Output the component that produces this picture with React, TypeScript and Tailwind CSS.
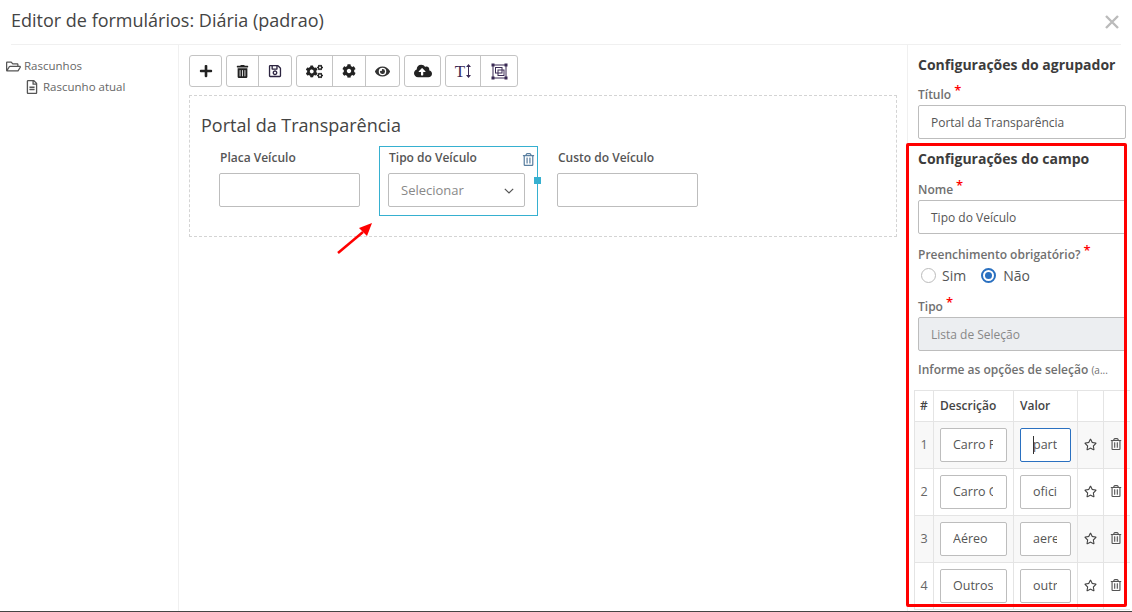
import React from 'react';
import {
  FaPlus, FaTrashAlt, FaRegSave, FaCogs, FaCog, FaEye, FaCloudUploadAlt,
  FaRegStar, FaRegTrashAlt, FaRegFolderOpen, FaRegFileAlt,
} from 'react-icons/fa';

const btn = 'flex h-[30px] items-center justify-center text-[#222]';

const Req = () => <span className="relative top-[-4px] ml-[3px] text-[13px] leading-none text-[#f00]">*</span>;

const Label = ({ children, className = '' }: { children: React.ReactNode; className?: string }) => (
  <div className={`text-[12px] leading-[16px] font-semibold text-[#707070] ${className}`}>{children}</div>
);

const TextBox = ({ value, className = '' }: { value: string; className?: string }) => (
  <div className={`flex h-[34px] w-[208px] shrink-0 items-center rounded-[2px] border border-[#bdbdbd] pt-px pl-3 text-[12px] text-[#555] ${className}`}>
    {value}
  </div>
);

const rows = [
  { n: 1, d: 'Carro Particular', v: 'particular', focus: true },
  { n: 2, d: 'Carro Oficial', v: 'oficial', focus: false },
  { n: 3, d: 'Aéreo', v: 'aereo', focus: false },
  { n: 4, d: 'Outros', v: 'outros', focus: false },
];

const Field = ({ label, className = '' }: { label: string; className?: string }) => (
  <div className={`w-[141px] ${className}`}>
    <div className="pl-px text-[12px] leading-[16px] font-semibold text-[#555]">{label}</div>
    <div className="mt-[7px] h-[34px] rounded-[2px] border border-[#bdbdbd]" />
  </div>
);

const ObjectIcon = () => (
  <svg width="17" height="17" viewBox="0 0 17 17" fill="none" stroke="#3a2a55" strokeWidth="1">
    <rect x="2" y="2" width="13" height="13" />
    <rect x="4.5" y="4.5" width="6.5" height="5.5" />
    <rect x="7" y="7" width="6" height="5.5" />
    <g fill="#3a2a55" stroke="none">
      <rect x="0.5" y="0.5" width="3" height="3" />
      <rect x="13.5" y="0.5" width="3" height="3" />
      <rect x="0.5" y="13.5" width="3" height="3" />
      <rect x="13.5" y="13.5" width="3" height="3" />
    </g>
  </svg>
);

export default function App() {
  return (
    <div className="relative flex h-[612px] w-[1132px] flex-col overflow-hidden bg-white font-['Open_Sans',sans-serif] text-[#333]">
      {/* cabecalho */}
      <div className="mx-[11px] flex h-[45px] shrink-0 items-start justify-between border-b border-[#f0f0f0] pt-[7px]">
        <div className="text-[18px] leading-[26px] text-[#444]">Editor de formulários: Diária (padrao)</div>
        <svg className="mt-[8px] mr-[2px]" width="14" height="14" viewBox="0 0 14 14" stroke="#bbb" strokeWidth="2.4">
          <path d="M1 1 L13 13 M13 1 L1 13" />
        </svg>
      </div>

      <div className="flex min-h-0 flex-1">
        {/* arvore */}
        <div className="w-[179px] shrink-0 border-r border-[#f0f0f0] pt-[11px] pl-[6px] text-[11.5px] leading-[20px] text-[#666]">
          <div className="flex items-center gap-[3px]">
            <FaRegFolderOpen className="text-[15px] text-[#555]" />
            <span>Rascunhos</span>
          </div>
          <div className="mt-px ml-[19px] flex items-center gap-[7px]">
            <FaRegFileAlt className="text-[14px] text-[#555]" />
            <span className="-ml-[3px]">Rascunho atual</span>
          </div>
        </div>

        {/* area central */}
        <div className="w-[728px] shrink-0 pt-[10px] pl-[10px]">
          <div className="flex gap-1">
            <div className="flex rounded-[3px] border border-[#c4c4c4]">
              <div className={`${btn} w-[31px]`}><FaPlus className="text-[14px]" /></div>
            </div>
            <div className="flex divide-x divide-[#c4c4c4] rounded-[3px] border border-[#c4c4c4]">
              <div className={`${btn} w-[32px]`}><FaTrashAlt className="text-[13px]" /></div>
              <div className={`${btn} w-[32px]`}><FaRegSave className="text-[14px] text-[#2c2440]" /></div>
            </div>
            <div className="flex divide-x divide-[#c4c4c4] rounded-[3px] border border-[#c4c4c4]">
              <div className={`${btn} w-[36px]`}><FaCogs className="text-[17px]" /></div>
              <div className={`${btn} w-[33px]`}><FaCog className="text-[14px]" /></div>
              <div className={`${btn} w-[33px]`}><FaEye className="text-[15px] text-[#333]" /></div>
            </div>
            <div className="flex rounded-[3px] border border-[#c4c4c4]">
              <div className={`${btn} w-[35px]`}><FaCloudUploadAlt className="text-[18px]" /></div>
            </div>
            <div className="flex divide-x divide-[#c4c4c4] rounded-[3px] border border-[#c4c4c4]">
              <div className={`${btn} w-[35px] gap-px`}>
                <span className="font-['Liberation_Serif',serif] text-[17px] leading-none text-[#3a2a55]">T</span>
                <svg width="5" height="14" viewBox="0 0 5 14" fill="#3a2a55">
                  <path d="M2.5 0 L5 3 L3 3 L3 11 L5 11 L2.5 14 L0 11 L2 11 L2 3 L0 3 Z" />
                </svg>
              </div>
              <div className={`${btn} w-[36px]`}><ObjectIcon /></div>
            </div>
          </div>

          <div className="mt-[8px] h-[142px] w-[708px] border border-dashed border-[#d4d4d4] pt-[17px] pl-[11px]">
            <div className="text-[18px] leading-[25px] text-[#444]">Portal da Transparência</div>
            <div className="mt-[8px] flex items-start">
              <Field label="Placa Veículo" className="mt-[4px] ml-[18px]" />
              <div className="relative ml-[19px] h-[70px] w-[159px] border border-[#36b0d0] pt-[3px] pl-2">
                <div className="pl-px text-[12px] leading-[16px] font-semibold text-[#555]">Tipo do Veículo</div>
                <FaRegTrashAlt className="absolute top-[6px] right-[2px] text-[13px] text-[#5a7fa0]" />
                <div className="mt-[7px] flex h-[34px] w-[137px] items-center justify-between rounded-[2px] border border-[#bdbdbd] pt-px pr-[10px] pl-[12px] text-[13px] text-[#888]">
                  <span>Selecionar</span>
                  <svg width="10" height="6" viewBox="0 0 10 6" fill="none" stroke="#555" strokeWidth="1.2">
                    <path d="M0.8 0.8 L5 5 L9.2 0.8" />
                  </svg>
                </div>
                <div className="absolute top-[30px] right-[-4px] h-[7px] w-[7px] bg-[#36b0d0]" />
              </div>
              <Field label="Custo do Veículo" className="mt-[4px] ml-[19px]" />
            </div>
          </div>
        </div>

        {/* configuracoes */}
        <div className="relative min-w-0 flex-1 border-l border-[#f0f0f0] pt-[11px] pl-[10px]">
          <div className="text-[14px] leading-[18px] font-bold whitespace-nowrap text-[#3c3c3c]">Configurações do agrupador</div>
          <Label className="mt-[13px] mb-[2px]">Título<Req /></Label>
          <TextBox value="Portal da Transparência" />
          <div className="mt-[11px] text-[14px] leading-[18px] font-bold text-[#3c3c3c]">Configurações do campo</div>
          <Label className="mt-[14px] mb-[2px]">Nome<Req /></Label>
          <TextBox value="Tipo do Veículo" />
          <Label className="mt-[13px] whitespace-nowrap">Preenchimento obrigatório?<Req /></Label>
          <div className="mt-[2px] flex h-[20px] items-center pl-[3px] text-[14px] text-[#555]">
            <span className="h-[15px] w-[15px] rounded-full border border-[#bbb]" />
            <span className="ml-[6px]">Sim</span>
            <span className="ml-[15px] flex h-[15px] w-[15px] items-center justify-center rounded-full border-2 border-[#2a70c0]">
              <span className="h-[7px] w-[7px] rounded-full bg-[#2a70c0]" />
            </span>
            <span className="ml-[7px]">Não</span>
          </div>
          <Label className="mt-[14px] mb-[2px]">Tipo<Req /></Label>
          <TextBox value="Lista de Seleção" className="bg-[#eceef1] text-[#888]" />
          <div className="mt-[11px] text-[12px] leading-[16px] font-semibold whitespace-nowrap text-[#707070]">
            Informe as opções de seleção <span className="text-[10px] font-normal">(a...</span>
          </div>

          <div className="mt-[12px] -ml-[4px] w-[216px]">
            <div className="flex h-[32px] border-y border-[#e4e4e4] text-[12px] font-semibold text-[#444]">
              <div className="flex w-[20px] shrink-0 items-center justify-center border-x border-[#e4e4e4]">#</div>
              <div className="flex w-[80px] shrink-0 items-center border-r border-[#e4e4e4] pl-[6px]">Descrição</div>
              <div className="flex w-[64px] shrink-0 items-center border-r border-[#e4e4e4] pl-[6px]">Valor</div>
              <div className="w-[26px] shrink-0 border-r border-[#e4e4e4]" />
            </div>
            {rows.map((r) => (
              <div key={r.n} className={`flex h-[47px] border-b border-[#e4e4e4] text-[12.5px] ${r.n % 2 === 1 ? 'bg-[#f8f8f8]' : 'bg-white'}`}>
                <div className="flex w-[20px] shrink-0 items-center justify-center border-x border-[#e4e4e4] text-[#666]">{r.n}</div>
                <div className="flex w-[80px] shrink-0 items-center border-r border-[#e4e4e4] pl-[6px]">
                  <div className="flex h-[34px] w-[67px] items-center rounded-[2px] border border-[#bdbdbd] bg-white pt-px pr-[13px] pl-[12px] text-[#555]">
                    <span className="w-full overflow-hidden whitespace-nowrap">{r.d}</span>
                  </div>
                </div>
                <div className="flex w-[64px] shrink-0 items-center border-r border-[#e4e4e4] pl-[6px]">
                  <div className={`relative flex h-[34px] w-[51px] items-center rounded-[2px] border bg-white pt-px pr-[13px] pl-[12px] text-[#555] ${r.focus ? 'border-[#2a70c0]' : 'border-[#bdbdbd]'}`}>
                    <span className="w-full overflow-hidden whitespace-nowrap">{r.v}</span>
                    {r.focus && <span className="absolute top-[7px] left-[12px] h-[18px] w-px bg-[#333]" />}
                  </div>
                </div>
                <div className="flex w-[26px] shrink-0 items-center justify-center border-r border-[#e4e4e4] pb-[2px]">
                  <FaRegStar className="text-[13px] text-[#444]" />
                </div>
                <div className="flex flex-1 items-center justify-center pr-[3px] pb-[2px]">
                  <FaRegTrashAlt className="text-[12px] text-[#555]" />
                </div>
              </div>
            ))}
          </div>
        </div>
      </div>

      {/* linha inferior */}
      <div className="h-px shrink-0 bg-[#444]" />

      {/* marcacoes da captura */}
      <div className="pointer-events-none absolute top-[143px] left-[906px] h-[464px] w-[221px] rounded-[2px] border-[3px] border-[#f00]" />
      <svg className="pointer-events-none absolute top-[220px] left-[335px]" width="40" height="36" viewBox="0 0 40 36">
        <path d="M3 33 L28 12" stroke="#f00" strokeWidth="2.5" />
        <path d="M37 3 L24 8 L32 16 Z" fill="#f00" />
      </svg>
    </div>
  );
}
